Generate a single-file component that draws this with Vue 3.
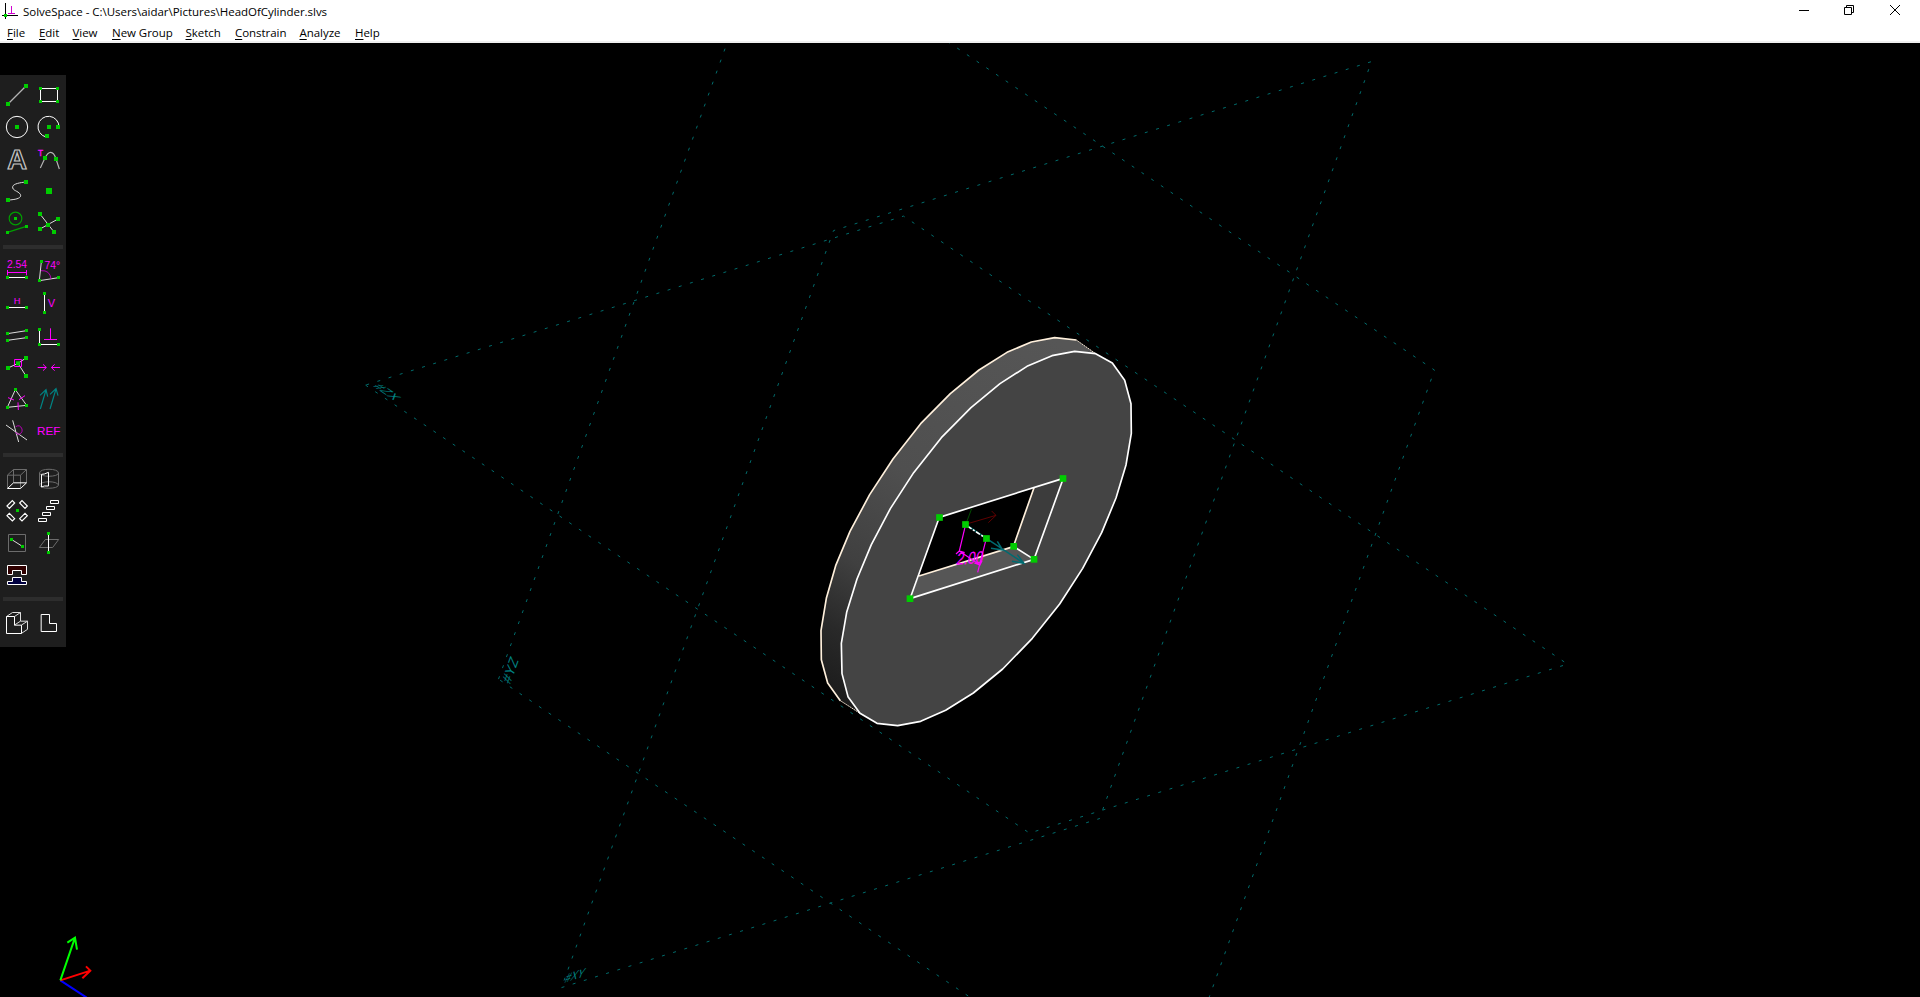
<script setup>
const menus = [
  ['F', 'ile'], ['E', 'dit'], ['V', 'iew'], ['N', 'ew Group'],
  ['S', 'ketch'], ['C', 'onstrain'], ['A', 'nalyze'], ['H', 'elp'],
]

// Each tool: view box origin (3 units per pixel), strokes [class, path], points [x, y, size], texts [x, y, size, text]
const groups = [
  [
    { n: 'Line', o: [3, 27], s: [['grey', 'M24 102L78 48']], p: [[24, 102, 12], [78, 48, 12]] },
    { n: 'Rectangle', o: [99, 27], s: [['white', 'M121.5 55.5H172.5V94.5H121.5Z']], p: [[121.5, 55.5, 9], [172.5, 55.5, 9], [121.5, 94.5, 9], [172.5, 94.5, 9]] },
    { n: 'Circle', o: [3, 123], s: [['white', 'M19 171A32 32 0 1 1 83 171A32 32 0 1 1 19 171']], p: [[51, 171, 12]] },
    { n: 'Arc', o: [99, 123], s: [['white', 'M138 201A31.500 31.500 0 1 1 177 171']], p: [[147, 171, 12], [174, 171, 12], [141, 198, 12]] },
    { n: 'Text', o: [3, 219], t: [[51, 298, 82, 'A', 'outline']] },
    { n: 'Tangent arc', o: [99, 219], s: [['grey', 'M121 294L135 264Q143 247 152 247Q162 247 168 267L178 297']], p: [[135, 264, 12], [168, 267, 12]], t: [[122, 258, 25, 'T', 'heavy']] },
    { n: 'Bezier', o: [3, 315], s: [['light', 'M24 390C52 389 66 383 61 373C54 362 36 362 38 350C40 341 60 338 78 336']], p: [[24, 390, 12], [78, 336, 12]] },
    { n: 'Point', o: [99, 315], p: [[147, 363, 18]] },
    { n: 'Construction', o: [3, 411], s: [['dgreen', 'M27.500 445.500A19 19 0 1 1 65.500 445.500A19 19 0 1 1 27.500 445.500M22 487L79 469']], p: [[46.5, 445.5, 9], [22.5, 487.5, 9], [79.5, 469.5, 9]] },
    { n: 'Split', o: [99, 411], s: [['light', 'M120 432L162 486M120 477L174 447']], p: [[120, 432, 12], [162, 486, 12], [120, 477, 12], [174, 447, 12], [144, 465, 12]] },
  ],
  [
    { n: 'Distance', o: [3, 45], s: [['mag', 'M22.500 90V106M79.500 90V106M22 97.500H80'], ['white', 'M22 112.500H80']], p: [[22.5, 112.5, 9], [79.5, 112.5, 9]], t: [[51, 83, 31, '2.54']] },
    { n: 'Angle', o: [99, 45], s: [['light', 'M124 65L118 122L176 113'], ['dmag', 'M123 92Q150 90 153 117']], p: [[124.5, 64.5, 9], [118.5, 121.5, 9], [175.5, 112.5, 9]], t: [[157, 86, 31, '74°']] },
    { n: 'Horizontal', o: [3, 141], s: [['white', 'M22 202.500H80']], p: [[22.5, 202.5, 9], [79.5, 202.5, 9]], t: [[51, 192, 28, 'H']] },
    { n: 'Vertical', o: [99, 141], s: [['white', 'M133.500 160V217']], p: [[133.5, 160.5, 9], [133.5, 217.5, 9]], t: [[154.5, 201, 33, 'V']] },
    { n: 'Parallel', o: [3, 237], s: [['light', 'M22 281L80 272M22 301L80 293']], p: [[22.5, 280.5, 9], [79.5, 271.5, 9], [22.5, 301.5, 9], [79.5, 292.5, 9]] },
    { n: 'Perpendicular', o: [99, 237], s: [['white', 'M118.500 268V313.500H176'], ['mag', 'M151.500 265V298.500M132 298.500H171']], p: [[118.5, 268.5, 9], [118.5, 313.5, 9], [175.5, 313.5, 9]] },
    { n: 'Point on', o: [3, 333], s: [['light', 'M24 384L54 370L78 354M54 370L78 408']], p: [[24, 384, 12], [78, 354, 12], [78, 408, 12], [54, 370, 12]], u: 'M43.500 358.500H64.500V379.500H43.500Z' },
    { n: 'Symmetric', o: [99, 333], s: [['mag', 'M113 382.500H139M129 373L139 382.500L129 392M180 382.500H154M164 373L154 382.500L164 392']] },
    { n: 'Equal', o: [3, 429], s: [['light', 'M46 449L80 496L22 502Z'], ['mag', 'M24 473L42 480M57 479L75 467M54 487L55 510']], p: [[46.5, 448.5, 9], [79.5, 496.5, 9], [22.5, 502.5, 9]] },
    { n: 'Same orientation', o: [99, 429], s: [['teal', 'M121 507L138 450M120 466L138 449L143 470M150 507L168 447M150 463L168 446L174 467']] },
    { n: 'Other angle', o: [3, 525], s: [['light', 'M18 555L81 600M38 541L56 606'], ['dmag', 'M47 560Q60 552 66 567Q69 582 52 583L47 576']] },
    { n: 'Reference', o: [99, 525], t: [[146, 585, 35, 'REF']] },
  ],
  [
    { n: 'Extrude', o: [3, 39], s: [['dim', 'M22.500 115V75L40.500 58.500H79.500V98M22.500 75.500H61.500V115M61.500 75.500L79.500 58.500M40.500 58.500V98'], ['white', 'M22.500 115.500H61.500L79.500 98.500H40.500Z']] },
    { n: 'Lathe', o: [99, 39], s: [['dim', 'M118.500 69C118.500 54 175.500 54 175.500 69C175.500 82 118.500 82 118.500 69V105C118.500 118 175.500 118 175.500 105V69M118.500 105C122 92 172 92 175.500 105'], ['white', 'M124.500 73V111L133 108H145.500V67L133 72Z']] },
    { n: 'Rotate', o: [3, 135], s: [['bright', 'M21 168L37 152L44 159L28 175ZM59 159L66 152L82 168L75 175ZM21 197L28 190L44 206L37 213ZM59 206L75 190L82 197L66 213Z']], p: [[52.5, 181.5, 9]] },
    { n: 'Translate', o: [99, 135], s: [['white', 'M151.500 151.500H175.500V160.500H151.500ZM139.500 169.500H163.500V178.500H139.500ZM127.500 187.500H151.500V196.500H127.500ZM115.500 205.500H139.500V214.500H115.500Z']] },
    { n: 'Workplane sketch', o: [3, 231], s: [['dim', 'M25.500 253.500H76.500V304.500H25.500Z'], ['light', 'M34 268L67 289']], p: [[34.5, 268.5, 9], [67.5, 289.5, 9]] },
    { n: 'Sketch 3D', o: [99, 231], s: [['dim', 'M136 268.500H176L158 292.500H118Z'], ['white', 'M145.500 250V307']], p: [[145.5, 250.5, 9], [145.5, 307.5, 9]] },
    { n: 'Assemble', o: [3, 327], s: [['white red', 'M22.500 346.500H79.500V373.500H64.500V361.500H37.500V373.500H22.500Z'], ['white navy', 'M37.500 382.500H64.500V394.500H79.500V403.500H22.500V394.500H37.500Z']] },
  ],
  [
    { n: 'Isometric view', o: [3, 471], s: [['light', 'M19.500 499.500L37.500 487.500H61.500V513M43.500 499.500L61.500 487.500M43.500 525L61.500 513.500H82.500V538L64.500 550M64.500 525L82.500 513.500'], ['white', 'M19.500 550.500V499.500H43.500V525.500H64.500V550.500Z']] },
    { n: 'Ortho view', o: [99, 471], s: [['white', 'M123.500 493.500H148.500V520.500H169.500V544.500H123.500Z']] },
  ],
]

// Workplane outlines: centre plus and minus the half-length axis vectors
const c = [966.5, 524.6]
const X = [269, -84.5], Y = [136, -378.5], Z = [332, 224]
const corner = (a, b, i, j) => [c[0] + a[0] * i + b[0] * j, c[1] + a[1] * i + b[1] * j].join(',')
const planes = [[X, Y], [Y, Z], [Z, X]].map(([a, b]) =>
  [[-1, -1], [1, -1], [1, 1], [-1, 1]].map(([i, j]) => corner(a, b, i, j)).join(' '))

const front = '824,94 887,101 937,129 974,181 993,251 994,340 978,435 948,534 905,638 848,745 779,852 697,955 608,1047 520,1119 437,1171 362,1204 293,1217 231,1210 180,1180 144,1130 126,1061 124,970 140,877 171,777 214,674 271,566 341,458 424,353 513,263 600,191 681,139 756,107'
const backEdge = '829,60 764,53 694,66 621,97 537,150 451,221 362,311 279,417 209,524 150,634 107,737 79,835 63,932 64,1019 83,1089 121,1142'
const handles = [[418.5, 592.5], [789, 475.5], [702, 718], [330, 836], [496.5, 613.5], [559.5, 655.5], [641, 679]]
</script>

<template>
  <div class="window">
    <header class="titlebar">
      <svg class="logo" width="18" height="20" viewBox="0 0 54 60">
        <path d="M16.500 9V57M6 46.500H54" stroke="#000" stroke-width="3" />
        <path d="M34.500 18V40M24 40.500H45" stroke="#d000d0" stroke-width="3" />
        <path d="M12 42H21V51H12Z" fill="#00d000" />
      </svg>
      <span class="title">SolveSpace - C:\Users\aidar\Pictures\HeadOfCylinder.slvs</span>
      <svg class="controls" width="104" height="20" viewBox="0 0 104 20">
        <path d="M0 10.500H10M45.500 7.500H52.500V14.500H45.500ZM47.500 7V5.500H54.500V12.500H53M91 5L101 15M101 5L91 15" />
      </svg>
    </header>
    <nav class="menubar">
      <span v-for="m in menus" :key="m[0]"><u>{{ m[0] }}</u>{{ m[1] }}</span>
    </nav>
    <main class="canvas">
      <svg class="scene" width="1920" height="954" viewBox="0 43 1920 954">
        <defs>
          <linearGradient id="rim" gradientUnits="userSpaceOnUse" x1="760" y1="60" x2="100" y2="1130">
            <stop offset="0" stop-color="#565656" />
            <stop offset=".45" stop-color="#4f4f4f" />
            <stop offset=".7" stop-color="#404040" />
            <stop offset=".86" stop-color="#292929" />
            <stop offset="1" stop-color="#1c1c1c" />
          </linearGradient>
        </defs>
        <polygon v-for="p in planes" :key="p" class="plane" :points="p" />
        <g class="tag">
          <text transform="matrix(.83 .56 -.85 .27 372.500 386)">#ZX</text>
          <text transform="matrix(.34 -.94 .83 .56 510 684.900)">#YZ</text>
          <text transform="matrix(.72 -.23 -.34 .94 564.100 982.900)">#XY</text>
        </g>
        <g transform="translate(800 320) scale(.33333)" fill="none">
          <polygon :points="backEdge + ' 180,1180 300,1100 900,200 887,101'" fill="url(#rim)" />
          <polyline class="back" :points="backEdge" />
          <path d="M829 60L887 101M121 1142L180 1180" class="back faint" />
          <polygon :points="front" class="face" />
          <path d="M418 592L790 475L702 718L330 836Z" fill="#000" />
          <path d="M702 503L790 475L702 718L640 680Z" fill="#3c3c3c" />
          <path d="M357 768L640 680L702 718L330 836Z" fill="#565656" />
          <path d="M357 768L640 680L702 503" class="back" />
          <path d="M418 592L790 475L702 718L330 836ZM640 679L702 718" class="edge" />
          <path d="M500 606L515 566" stroke="#004d00" stroke-width="3" />
          <path d="M500 612L588 586M575 573L588 586L565 608" stroke="#600000" stroke-width="3" />
          <path d="M497 613L559 655" stroke="#006666" stroke-width="4" />
          <path d="M503 619L555 653" stroke="#fff" stroke-width="5" stroke-dasharray="14 5 6 5" />
          <path d="M559 655L672 730M573 685L608 690L592 664M636 724L672 730L652 704" stroke="#006a70" stroke-width="4.500" />
          <g class="dim">
            <path d="M497 613L478 693M559 655L533 757M478 693L540 735M468 702L478 693L494 698M523 729L540 735L546 722" />
            <text transform="matrix(.76 -.05 -.18 .95 467 734)">2.00</text>
          </g>
          <rect v-for="h in handles" :key="h[0]" class="pt" :x="h[0] - 10" :y="h[1] - 10" width="20" height="20" />
        </g>
        <g transform="translate(0 920) scale(.33333)" fill="none" stroke-width="6">
          <path d="M181 181L260 233" stroke="#00f" />
          <path d="M181 181L271 152M258 139L271 152L247 175" stroke="#f00" />
          <path d="M181 181L225 53M202 68L225 53L231 89" stroke="#0f0" />
        </g>
      </svg>
      <aside class="toolbar">
        <div v-for="(g, i) in groups" :key="i" class="group">
          <div v-for="t in g" :key="t.n" class="tool">
            <svg width="32" height="32" :viewBox="`${t.o[0]} ${t.o[1]} 96 96`">
              <path v-for="s in t.s" :key="s[1]" :class="s[0]" :d="s[1]" />
              <rect v-for="(p, k) in t.p" :key="k" class="pt" :x="p[0] - p[2] / 2" :y="p[1] - p[2] / 2" :width="p[2]" :height="p[2]" />
              <path v-if="t.u" class="mag" :d="t.u" />
              <text v-for="x in t.t" :key="x[3]" :x="x[0]" :y="x[1]" :font-size="x[2]" :class="x[4]">{{ x[3] }}</text>
            </svg>
          </div>
        </div>
      </aside>
    </main>
  </div>
</template>

<style scoped>
.window {
  width: 1920px;
  height: 997px;
  display: flex;
  flex-direction: column;
  overflow: hidden;
  background: #fff;
  color: #000;
  font: 11.5px/16px "Open Sans", "Noto Sans", sans-serif;
}
.titlebar { height: 22px; display: flex; align-items: flex-start; }
.logo { margin-right: 5px; }
.title { flex: 1; margin-top: 4px; letter-spacing: -.03px; white-space: nowrap; }
.controls { margin-right: 17px; }
.controls path { fill: none; stroke: #000; stroke-width: 1; }
.menubar {
  height: 19px;
  display: grid;
  grid-template-columns: 32px 33.5px 39.5px 73.5px 49.5px 64.5px 55.5px 40px;
  padding-left: 7px;
  border-bottom: 2px solid #f0f0f0;
  letter-spacing: -.04px;
  line-height: 22px;
  white-space: nowrap;
}
.menubar u { text-underline-offset: 2px; text-decoration-thickness: 1px; }
.canvas { height: 954px; display: grid; background: #000; }
.scene, .toolbar { grid-area: 1 / 1; }
.scene { display: block; }
.toolbar {
  width: 66px;
  box-sizing: border-box;
  align-self: start;
  margin-top: 32px;
  padding: 4px 1px 8px;
  background: #1e1e1e;
}
.group { display: grid; grid-template-columns: 32px 32px; }
.group + .group { margin-top: 6px; }
.group + .group::before {
  content: "";
  grid-column: 1 / 3;
  height: 4px;
  margin: 0 2px 6px;
  background: #2d2d2d;
}
.tool, .tool svg { display: block; width: 32px; height: 32px; }
.tool path { fill: none; stroke-width: 3; }
.tool .white { stroke: #fff; }
.tool .bright { stroke: #fff; stroke-width: 3.500; }
.tool .light { stroke: #dcdcdc; }
.tool .grey { stroke: #b4b4b4; stroke-width: 3.500; }
.tool .dim { stroke: #6c6c6c; }
.tool .mag { stroke: #f0f; }
.tool .dmag { stroke: #b400b4; }
.tool .dgreen { stroke: #00a000; stroke-width: 3.500; }
.tool .teal { stroke: #008484; stroke-width: 3.500; }
.tool .red { fill: #300000; }
.tool .navy { fill: #000040; }
.tool text { fill: #f0f; font-family: "Liberation Sans", sans-serif; text-anchor: middle; }
.tool .heavy { stroke: #f0f; stroke-width: 1; }
.tool .outline { fill: none; stroke: #c8c8c8; stroke-width: 3.500; font-weight: bold; }
.pt { fill: #00cc00; }
.plane { fill: none; stroke: #006c6c; stroke-width: 1; stroke-dasharray: 3 8.700; }
.tag { fill: #008080; font: 14px "Liberation Sans", sans-serif; }
.edge, .back, .face { stroke: #fff; stroke-width: 5; stroke-linejoin: round; }
.back { stroke: #fff0dc; }
.faint { stroke-width: 3; stroke-dasharray: 5 2; }
.face { fill: #444; }
.dim path { stroke: #f0f; stroke-width: 3.500; }
.dim text { fill: #f0f; stroke: #f0f; stroke-width: .5; font: 54px "Liberation Sans", sans-serif; }
</style>

<style>
body { background: #000; }
</style>
